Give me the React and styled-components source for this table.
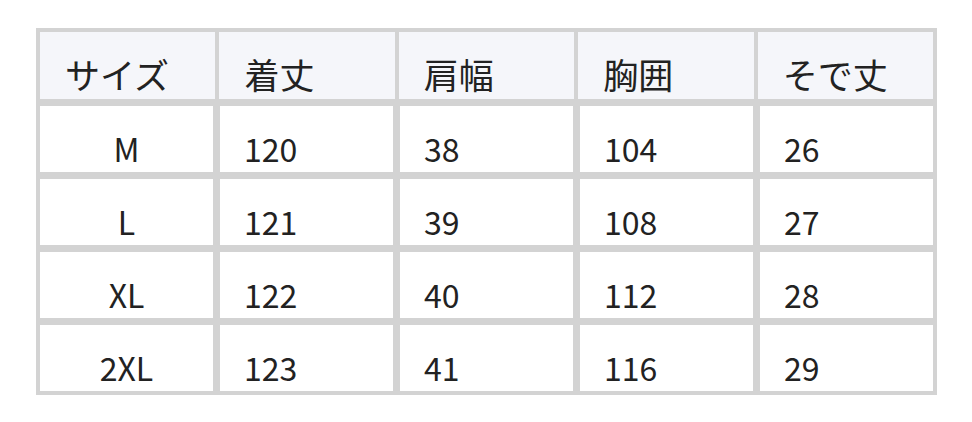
import React from "react";
import styled, { createGlobalStyle } from "styled-components";

const GlobalStyle = createGlobalStyle`
  html, body {
    margin: 0;
    padding: 0;
    background: #ffffff;
  }
  body {
    font-family: "Noto Sans CJK JP", "Noto Sans", sans-serif;
    color: #222222;
  }
`;

const headers = ["サイズ", "着丈", "肩幅", "胸囲", "そで丈"];

const rows = [
  ["M", "120", "38", "104", "26"],
  ["L", "121", "39", "108", "27"],
  ["XL", "122", "40", "112", "28"],
  ["2XL", "123", "41", "116", "29"],
];

function App() {
  return (
    <>
      <GlobalStyle />
      <Page>
        <SizeTable>
          <HeadRow>
            {headers.map((h) => (
              <HeadCell key={h}>{h}</HeadCell>
            ))}
          </HeadRow>
          {rows.map((r) => (
            <BodyRow key={r[0]}>
              {r.map((v, i) => (
                <Cell key={i} $center={i === 0}>
                  {v}
                </Cell>
              ))}
            </BodyRow>
          ))}
        </SizeTable>
      </Page>
    </>
  );
}

export default App;

const Page = styled.div`
  padding: 28px 0 0 36px;
`;

const SizeTable = styled.div`
  width: 893px;
  padding: 4px;
  background: #d3d3d3;
  display: flex;
  flex-direction: column;
  gap: 7px;
`;

const HeadRow = styled.div`
  display: flex;
  gap: 4px;
  height: 67px;
`;

const HeadCell = styled.div`
  flex: 1;
  background: #f5f6fa;
  display: flex;
  align-items: flex-end;
  padding: 0 0 0 25px;
  font-size: 35px;
  line-height: normal;
`;

const BodyRow = styled.div`
  display: grid;
  grid-template-columns: repeat(5, 1fr);
  gap: 7px;
  height: 66px;
`;

const Cell = styled.div`
  background: #ffffff;
  display: flex;
  align-items: flex-end;
  justify-content: ${(p) => (p.$center ? "center" : "flex-start")};
  padding: ${(p) => (p.$center ? "0 0 1px 0" : "0 0 1px 24px")};
  font-size: 32px;
  line-height: normal;
`;
